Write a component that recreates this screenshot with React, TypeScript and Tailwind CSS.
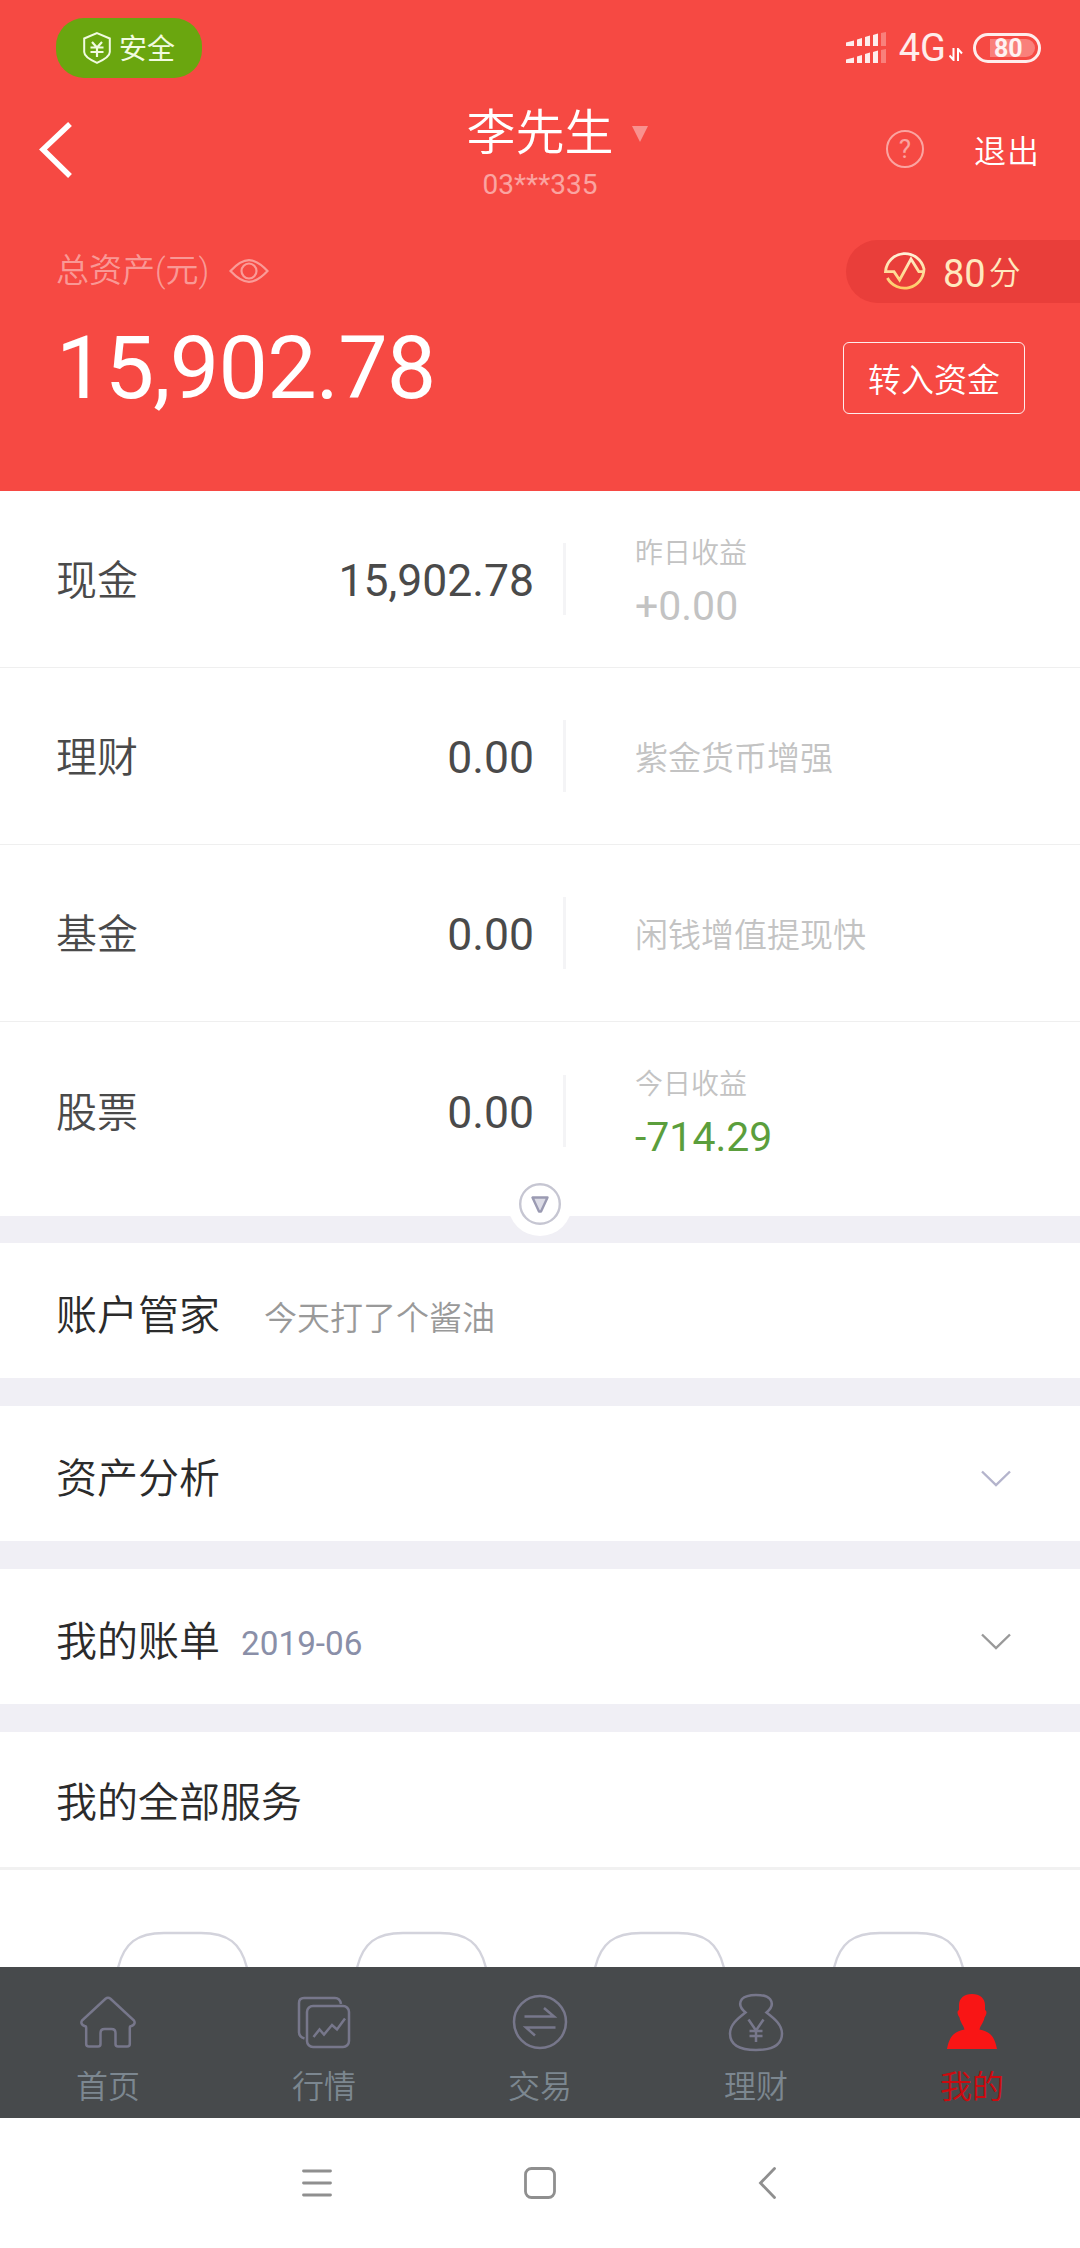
import type { ReactNode } from 'react'

const accounts = [
  { name: '现金', value: '15,902.78', hint: '昨日收益', profit: '+0.00', profitColor: 'text-[#c3c3c3]' },
  { name: '理财', value: '0.00', note: '紫金货币增强' },
  { name: '基金', value: '0.00', note: '闲钱增值提现快' },
  { name: '股票', value: '0.00', hint: '今日收益', profit: '-714.29', profitColor: 'text-[#5b9e3c]' },
]

function SignalIcon() {
  const rows = [0, 17]
  return (
    <svg width="40" height="32" viewBox="0 0 40 32" fill="#fff">
      {rows.map((y) => (
        <g key={y} transform={`translate(0 ${y})`}>
          <path d="M0 10.5L8 8.5V14H0z" opacity="0.9" />
          <path d="M11 7.5L16 6V14H11z" opacity="0.9" />
          <path d="M19 5L24 3.5V14H19z" opacity="0.9" />
          <path d="M27 3L32 1.5V14H27z" opacity="0.9" />
          <path d="M35 1L40 0V14H35z" opacity="0.3" />
        </g>
      ))}
    </svg>
  )
}

function StatusBar() {
  return (
    <div className="flex h-24 items-start justify-between pl-14 pr-[39px] pt-[18px]">
      <div className="flex h-[60px] w-[146px] items-center rounded-[28px] bg-[#6aa60f] pl-[27px] text-[#f1fbe0]">
        <svg width="28" height="32" viewBox="0 0 28 32" fill="none" stroke="currentColor" strokeWidth="2">
          <path d="M14 1.2L26.8 6.5V20c0 5-7.5 8.5-12.8 10.8C8.7 28.5 1.2 25 1.2 20V6.5z" />
          <path d="M9 10l5 5.5 5-5.5M7.5 15.5h13M7.5 20h13M14 15.5V25" strokeWidth="2.2" />
        </svg>
        <span className="ml-[8px] pt-[4px] text-[28px] leading-none">安全</span>
      </div>
      <div className="flex items-center pt-[14px]">
        <SignalIcon />
        <span className="ml-[13px] text-[38px] leading-[30px] text-white/90">4G</span>
        <svg className="ml-[3px] mt-[13px]" width="14" height="13" viewBox="0 0 14 13" fill="none" stroke="#fff" strokeWidth="2">
          <path d="M4.5 0v12L0.5 7.5M9 13V1l4 4.5" />
        </svg>
        <div className="ml-[10px] flex h-[30px] w-[68px] items-center rounded-full border-[3px] border-white/90 pl-[14px]">
          <div className="flex h-[18px] w-[45px] items-center rounded-r-full bg-white/30 pl-[4px]">
            <span className="text-[25px] font-bold leading-none text-white/90">80</span>
          </div>
        </div>
      </div>
    </div>
  )
}

function TitleBar() {
  return (
    <div className="grid h-[108px] grid-cols-3">
      <div className="pl-[39px] pt-[26px]">
        <svg width="34" height="56" viewBox="0 0 34 56" fill="none" stroke="#fff" strokeWidth="5.5">
          <path d="M31 2L4 27.5 31 54" />
        </svg>
      </div>
      <div className="flex flex-col items-center pt-[13px]">
        <div className="flex items-center pl-[34px]">
          <h1 className="text-[49px] font-[350] leading-[50px] text-white">李先生</h1>
          <svg className="ml-[18px]" width="16" height="16" viewBox="0 0 16 16">
            <path d="M0 0h16L8 16z" fill="#fff" opacity="0.4" />
          </svg>
        </div>
        <p className="mt-[10px] text-[28px] leading-[32px] text-white/50">03***335</p>
      </div>
      <div className="flex items-start justify-end pr-[40px] pt-[34px]">
        <div className="flex size-[38px] items-center justify-center rounded-full border-2 border-white/50 text-[26px] leading-none text-white/50">
          ?
        </div>
        <span className="ml-[50px] mt-[6px] text-[32px] font-[350] leading-[32px] tracking-[1px] text-white">退出</span>
      </div>
    </div>
  )
}

function ScoreIcon() {
  return (
    <svg width="42" height="42" viewBox="0 0 42 42" fill="none" stroke="url(#gold)" strokeWidth="2.8">
      <defs>
        <linearGradient id="gold" x1="0" y1="0" x2="0" y2="1">
          <stop offset="0" stopColor="#fff1d8" />
          <stop offset="1" stopColor="#ffcb66" />
        </linearGradient>
      </defs>
      <path d="M3.4 30A19.5 19.5 0 0 0 40 21A19.5 19.5 0 0 0 1.5 23.6H10L15.6 32 27 11 34.8 23.6H40" />
    </svg>
  )
}

function AssetHeader() {
  return (
    <header className="flex h-[491px] flex-col bg-[#f64943]">
      <StatusBar />
      <TitleBar />
      <div className="mt-9 flex justify-between">
        <div className="pl-14">
          <div className="flex items-center pt-[14px]">
            <span className="text-[33px] font-[350] leading-[34px] text-white/45">总资产(元)</span>
            <svg className="ml-[20px]" width="40" height="24" viewBox="0 0 40 24" fill="none" stroke="#fff" strokeOpacity="0.45" strokeWidth="2.2">
              <path d="M1.5 12C9 4 14 1.2 20 1.2S31 4 38.5 12C31 20 26 22.8 20 22.8S9 20 1.5 12z" />
              <circle cx="20" cy="12" r="7.5" />
            </svg>
          </div>
          <p className="mt-[36px] text-[88px] leading-[88px] tracking-[-0.8px] text-white">15,902.78</p>
        </div>
        <div className="flex flex-col items-end">
          <div className="flex h-[63px] w-[234px] items-center rounded-l-full bg-[#e93e3a] pl-[38px] text-[#ffe9bf]">
            <div className="pb-[5px]">
              <ScoreIcon />
            </div>
            <span className="ml-[17px] pt-[4px] text-[38px] leading-none">80</span>
            <span className="ml-[3px] pt-[3px] text-[32px] font-[350] leading-none">分</span>
          </div>
          <button className="mr-[55px] mt-[39px] flex h-[72px] w-[182px] items-center justify-center rounded-[6px] border border-white/90 pt-[4px] text-[33px] font-[350] leading-none text-white">
            转入资金
          </button>
        </div>
      </div>
    </header>
  )
}

function AccountList() {
  return (
    <section className="relative h-[725px]">
      {accounts.map((item) => (
        <div key={item.name} className="flex h-[177px] items-center border-b border-[#efefef] last-of-type:border-b-0">
          <div className="flex w-[563px] items-center justify-between pl-14 pr-[29px] pt-[5px] text-[#4a4a4a]">
            <span className="text-[41px] font-[350] leading-none">{item.name}</span>
            <span className="text-[44.5px] leading-none">{item.value}</span>
          </div>
          <div className="h-[72px] w-[3px] bg-[#f4f4f6]" />
          <div className="pl-[69px] pt-[5px]">
            {item.note ? (
              <p className="text-[33px] font-[350] leading-none text-[#c3c3c3]">{item.note}</p>
            ) : (
              <>
                <p className="text-[28px] font-[350] leading-[32px] text-[#c3c3c3]">{item.hint}</p>
                <p className={`mt-[16px] text-[41px] leading-[40px] ${item.profitColor}`}>{item.profit}</p>
              </>
            )}
          </div>
        </div>
      ))}
      <button className="absolute left-[508px] top-[681px] flex size-16 items-center justify-center rounded-full bg-white">
        <svg width="42" height="42" viewBox="0 0 42 42" fill="none">
          <circle cx="21" cy="21" r="19.8" stroke="#c6c6d2" strokeWidth="2.4" />
          <path d="M13.5 14.5h15L22 28.5h-2z" fill="#dcdce6" stroke="#9a9ab2" strokeWidth="2.4" strokeLinejoin="round" />
        </svg>
      </button>
    </section>
  )
}

function Chevron({ color }: { color: string }) {
  return (
    <svg className="mr-[69px] mt-[9px]" width="30" height="17" viewBox="0 0 30 17" fill="none" stroke={color} strokeWidth="2.4">
      <path d="M1 1.5l14 13.5 14-13.5" />
    </svg>
  )
}

function Section({ title, children }: { title: string; children?: ReactNode }) {
  return (
    <section className="flex h-[135px] items-center bg-white pl-14 last:pb-[4px]">
      <h2 className="mt-[11px] text-[41px] font-[350] leading-none text-[#2b2b2b]">{title}</h2>
      {children}
    </section>
  )
}

function ServiceGrid() {
  return (
    <div className="flex h-[97px] items-end gap-[96.6px] overflow-hidden pl-[112px]">
      {[0, 1, 2, 3].map((i) => (
        <svg key={i} className="shrink-0" width="142" height="36" viewBox="0 0 142 36" fill="none" stroke="#d3d3dc" strokeWidth="2.4">
          <path d="M6 37C12 12 25 2 52 2H89C116 2 129 12 135 37" />
        </svg>
      ))}
    </div>
  )
}

const tabs = [
  {
    label: '首页',
    icon: (
      <path d="M26.5 5.8Q29 3.8 31.5 5.8L55 27.5Q57 31 52.5 33Q50.8 33 50.8 35V51Q50.8 53.5 48 53.5H39Q36.5 53.5 36.5 51V40Q36.5 36 32.5 36H25.5Q21.5 36 21.5 40V51Q21.5 53.5 19 53.5H10Q7.2 53.5 7.2 51V35Q7.2 33 5.5 33Q1 31 3 27.5z" />
    ),
  },
  {
    label: '行情',
    icon: (
      <>
        <path d="M9.5 45.5Q4 44 4 39V10Q4 5 9 5H40Q45 5 46 11" />
        <rect x="12" y="13" width="42" height="41" rx="6" />
        <path d="M18.5 44l6-7.5 4.5 5 8-9.5 5 4.5 8-11" />
      </>
    ),
  },
  {
    label: '交易',
    icon: (
      <>
        <circle cx="29" cy="29" r="26" />
        <path d="M13.5 23.5H43L33 15M44.5 34.5H15L24 42.5" />
      </>
    ),
  },
  {
    label: '理财',
    icon: (
      <>
        <path d="M18.5 19.5C13 15 12 10 15 6C20 0.5 38 0.5 43 6C46 10 45 15 39.5 19.5C48 26 55 32 55 40.5C55 52 45 57 29 57S3 52 3 40.5C3 32 10 26 18.5 19.5z" />
        <path d="M21.5 26.5L29 37.5 36.5 26.5M22.5 38h13M22.5 43h13M29 37.5V49" />
      </>
    ),
  },
]

function TabBar() {
  return (
    <nav className="grid h-[151px] grid-cols-5 bg-[#474a4c]">
      {tabs.map((tab) => (
        <a key={tab.label} className="flex flex-col items-center pt-[26px]">
          <svg width="58" height="60" viewBox="0 0 58 60" fill="none" stroke="#77778b" strokeWidth="2.5">
            {tab.icon}
          </svg>
          <span className="mt-[17px] text-[32px] font-[350] leading-[34px] text-[#7c8790]">{tab.label}</span>
        </a>
      ))}
      <a className="flex flex-col items-center pt-[26px]">
        <svg width="58" height="60" viewBox="0 0 58 60" fill="#f91515">
          <path d="M29 1C37 1 42 5.5 42 12V17C44.5 18 43.5 22 41.5 24.5C40.5 30 37.5 32 36.5 36.5C46 39 51 41 54 56H4C7 41 12 39 21.5 36.5C20.5 32 17.5 30 16.5 24.5C14.5 22 13.5 18 16 17V12C16 5.5 21 1 29 1z" />
        </svg>
        <span className="mt-[17px] text-[32px] font-[350] leading-[34px] text-[#cc0a0f]">我的</span>
      </a>
    </nav>
  )
}

function SystemNav() {
  return (
    <div className="flex h-[130px] items-start bg-white pl-[302px] pt-[48px]">
      <svg width="30" height="34" viewBox="0 0 30 34" stroke="#8f8f8f" strokeWidth="2.8" strokeLinecap="round">
        <path d="M1.5 5h27M1.5 17h27M1.5 29h27" />
      </svg>
      <svg className="ml-[191px]" width="34" height="34" viewBox="0 0 34 34" fill="none" stroke="#8f8f8f" strokeWidth="2.8">
        <rect x="2.5" y="2.5" width="29" height="29" rx="6" />
      </svg>
      <svg className="ml-[200px]" width="20" height="34" viewBox="0 0 20 34" fill="none" stroke="#8f8f8f" strokeWidth="2.8" strokeLinecap="round">
        <path d="M17.5 2.5L3.5 17l14 14.5" />
      </svg>
    </div>
  )
}

export default function App() {
  return (
    <div className="flex h-[2248px] w-[1080px] flex-col overflow-hidden bg-white font-['Roboto','Noto_Sans_CJK_SC',sans-serif]">
      <AssetHeader />
      <AccountList />
      <main className="flex h-[751px] flex-col">
        <div className="flex flex-col gap-7 bg-[#f0eff5] pt-[27px]">
          <Section title="账户管家">
            <span className="ml-[44px] mt-[16px] text-[33px] font-[350] leading-none text-[#999]">今天打了个酱油</span>
          </Section>
          <Section title="资产分析">
            <div className="grow" />
            <Chevron color="#b4b4cc" />
          </Section>
          <Section title="我的账单">
            <span className="ml-[21px] mt-[15px] text-[33.3px] leading-none text-[#8a8fa8]">2019-06</span>
            <div className="grow" />
            <Chevron color="#999" />
          </Section>
          <Section title="我的全部服务" />
        </div>
        <div className="h-[3px] bg-[#f1f1f1]" />
        <ServiceGrid />
      </main>
      <TabBar />
      <SystemNav />
    </div>
  )
}
